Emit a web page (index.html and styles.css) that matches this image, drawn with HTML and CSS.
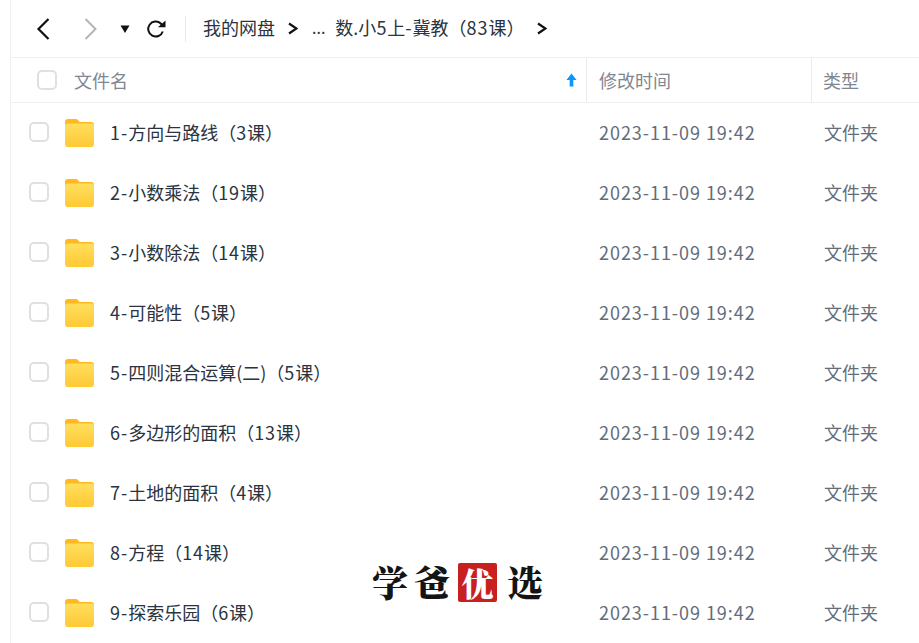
FILE: index.html
```html
<!DOCTYPE html>
<html lang="zh-CN">
<head>
<meta charset="utf-8">
<title>文件列表</title>
<link rel="stylesheet" href="styles.css">
</head>
<body>
<svg class="defs" width="0" height="0" aria-hidden="true">
  <defs>
    <linearGradient id="fg" x1="0" y1="0" x2="0" y2="1">
      <stop offset="0" stop-color="#ffdf5e"/>
      <stop offset="1" stop-color="#ffc933"/>
    </linearGradient>
    <symbol id="folder" viewBox="0 0 30 28">
      <path d="M0 3a3 3 0 0 1 3-3h7.500c1.500 0 2.200.6 3 1.500L14.500 3H26a3 3 0 0 1 3 3v4H0z" fill="#ffb91f"/>
      <rect x="0" y="4.500" width="29" height="23.500" rx="3" fill="url(#fg)"/>
    </symbol>
  </defs>
</svg>
<div class="app">
  <div class="toolbar">
    <svg class="nav-back" width="14" height="24" viewBox="0 0 14 24"><path d="M12.500 2 2.500 12 12.500 22" fill="none" stroke="#111" stroke-width="2.200"/></svg>
    <svg class="nav-forward" width="14" height="24" viewBox="0 0 14 24"><path d="M1.500 2 11.500 12 1.500 22" fill="none" stroke="#b4b4b4" stroke-width="2"/></svg>
    <svg class="nav-drop" width="10" height="8" viewBox="0 0 10 8"><path d="M.5.500h9L5 8z" fill="#111"/></svg>
    <svg class="nav-refresh" width="20" height="20" viewBox="0 0 20 20"><path d="M16.800 12.500A7.500 7.500 0 1 1 14.800 4.500L16.500 6.500" fill="none" stroke="#111" stroke-width="2"/><path d="M12 8.300h7.500V1.500z" fill="#111"/></svg>
    <span class="divider"></span>
    <nav class="crumbs">
      <span class="crumb-root">我的网盘</span>
      <svg class="chev" width="10" height="13" viewBox="0 0 10 13"><path d="M1 1.500 8.500 6.500 1 11.500" fill="none" stroke="#111" stroke-width="2.200"/></svg>
      <span class="crumb-dots">...</span>
      <span class="crumb-cur">数.小<i class="lat">5</i>上<i class="lat">-</i>冀教（<i class="lat">83</i>课）</span>
      <svg class="chev chev-last" width="10" height="13" viewBox="0 0 10 13"><path d="M1 1.500 8.500 6.500 1 11.500" fill="none" stroke="#111" stroke-width="2.200"/></svg>
    </nav>
  </div>
  <div class="thead">
    <div class="th th-name">
      <span class="check check-head"></span>
      <span>文件名</span>
      <svg class="sort" width="11" height="14" viewBox="0 0 12 14"><path d="M6 0 11.500 7H8v7H4V7H.5z" fill="#0a95ff"/></svg>
    </div>
    <div class="th th-time">修改时间</div>
    <div class="th th-type">类型</div>
  </div>
  <div class="row"><div class="cell-name"><span class="check"></span><svg class="folder"><use href="#folder"/></svg><span class="fname"><i class="lat">1-</i>方向与路线（<i class="lat">3</i>课）</span></div><div class="cell-time">2023-11-09 19:42</div><div class="cell-type">文件夹</div></div>
  <div class="row"><div class="cell-name"><span class="check"></span><svg class="folder"><use href="#folder"/></svg><span class="fname"><i class="lat">2-</i>小数乘法（<i class="lat">19</i>课）</span></div><div class="cell-time">2023-11-09 19:42</div><div class="cell-type">文件夹</div></div>
  <div class="row"><div class="cell-name"><span class="check"></span><svg class="folder"><use href="#folder"/></svg><span class="fname"><i class="lat">3-</i>小数除法（<i class="lat">14</i>课）</span></div><div class="cell-time">2023-11-09 19:42</div><div class="cell-type">文件夹</div></div>
  <div class="row"><div class="cell-name"><span class="check"></span><svg class="folder"><use href="#folder"/></svg><span class="fname"><i class="lat">4-</i>可能性（<i class="lat">5</i>课）</span></div><div class="cell-time">2023-11-09 19:42</div><div class="cell-type">文件夹</div></div>
  <div class="row"><div class="cell-name"><span class="check"></span><svg class="folder"><use href="#folder"/></svg><span class="fname"><i class="lat">5-</i>四则混合运算(二)（<i class="lat">5</i>课）</span></div><div class="cell-time">2023-11-09 19:42</div><div class="cell-type">文件夹</div></div>
  <div class="row"><div class="cell-name"><span class="check"></span><svg class="folder"><use href="#folder"/></svg><span class="fname"><i class="lat">6-</i>多边形的面积（<i class="lat">13</i>课）</span></div><div class="cell-time">2023-11-09 19:42</div><div class="cell-type">文件夹</div></div>
  <div class="row"><div class="cell-name"><span class="check"></span><svg class="folder"><use href="#folder"/></svg><span class="fname"><i class="lat">7-</i>土地的面积（<i class="lat">4</i>课）</span></div><div class="cell-time">2023-11-09 19:42</div><div class="cell-type">文件夹</div></div>
  <div class="row"><div class="cell-name"><span class="check"></span><svg class="folder"><use href="#folder"/></svg><span class="fname"><i class="lat">8-</i>方程（<i class="lat">14</i>课）</span></div><div class="cell-time">2023-11-09 19:42</div><div class="cell-type">文件夹</div></div>
  <div class="row"><div class="cell-name"><span class="check"></span><svg class="folder"><use href="#folder"/></svg><span class="fname"><i class="lat">9-</i>探索乐园（<i class="lat">6</i>课）</span></div><div class="cell-time">2023-11-09 19:42</div><div class="cell-type">文件夹</div></div>
</div>
<div class="mark"><span class="mark-first">学</span><span class="mark-second">爸</span><span class="seal">优</span><span>选</span></div>
</body>
</html>
```
FILE: styles.css
```css
html, body {
  margin: 0;
  padding: 0;
  height: 643px;
  overflow: hidden;
  background: #fff;
  font-family: "Noto Sans CJK SC", "Noto Sans", sans-serif;
}
.defs { display: block; height: 0; }
.app {
  margin-left: 10px;
  border-left: 1px solid #f0f0f0;
  height: 643px;
  overflow: hidden;
}
.toolbar {
  height: 57px;
  border-bottom: 1px solid #f0f0f0;
  display: flex;
  align-items: center;
  padding-left: 25px;
}
.nav-forward { margin-left: 34px; }
.nav-drop { margin-left: 22px; }
.nav-refresh { margin-left: 16px; }
.divider {
  width: 1px;
  height: 26px;
  background: #e8e8e8;
  margin-left: 19px;
}
.crumbs {
  display: flex;
  align-items: center;
  margin-left: 17px;
  font-size: 18px;
  color: #2b3340;
}
.crumbs span { position: relative; top: -2px; }
.lat { font-style: normal; letter-spacing: 0.95px; }
.chev { margin-left: 13px; }
.crumb-dots { margin-left: 14px; font-size: 16px; }
.crumb-cur { margin-left: 10px; }
.chev-last { margin-left: 13px; }
.thead {
  height: 44px;
  border-bottom: 1px solid #f0f0f0;
  display: grid;
  grid-template-columns: 575px 225px 1fr;
  font-size: 18px;
  color: #7f8792;
}
.th { display: flex; align-items: center; }
.th-name { padding-left: 26px; }
.th-name .check { margin-right: 17px; }
.sort { margin-left: auto; margin-right: 9px; }
.th-time { border-left: 1px solid #ececec; padding-left: 12px; }
.th-type { border-left: 1px solid #ececec; padding-left: 11px; }
.check {
  box-sizing: border-box;
  width: 20px;
  height: 20px;
  border: 2px solid #e0e0e0;
  border-radius: 5px;
  flex: none;
  background: #fff;
}
.row {
  height: 60px;
  display: grid;
  grid-template-columns: 577px 225px 1fr;
  align-items: center;
  font-size: 18px;
  line-height: 26px;
}
.cell-name { display: flex; align-items: center; padding-left: 18px; }
.row .check { margin-bottom: 2px; }
.folder { width: 30px; height: 28px; margin-left: 16px; flex: none; }
.fname { margin: 0 0 2px 15px; color: #2b3340; white-space: nowrap; }
.cell-time { padding-left: 11px; margin-bottom: 2px; color: #636d7a; white-space: nowrap; letter-spacing: 0.95px; }
.cell-type { padding-left: 11px; margin-bottom: 2px; color: #636d7a; white-space: nowrap; }
.mark {
  position: absolute;
  left: 372px;
  top: 562px;
  display: flex;
  align-items: center;
  gap: 10px;
  font-family: "Noto Serif CJK SC", "Noto Sans CJK SC", sans-serif;
  font-weight: 900;
  font-size: 36px;
  line-height: 40px;
  color: #141414;
}
.mark-first { margin-right: -4px; }
.mark-second { margin-right: -2px; }
.seal {
  width: 39px;
  height: 39px;
  background: #c8201f;
  color: #fff;
  border-radius: 2px;
  font-size: 32px;
  line-height: 39px;
  text-align: center;
}
```
